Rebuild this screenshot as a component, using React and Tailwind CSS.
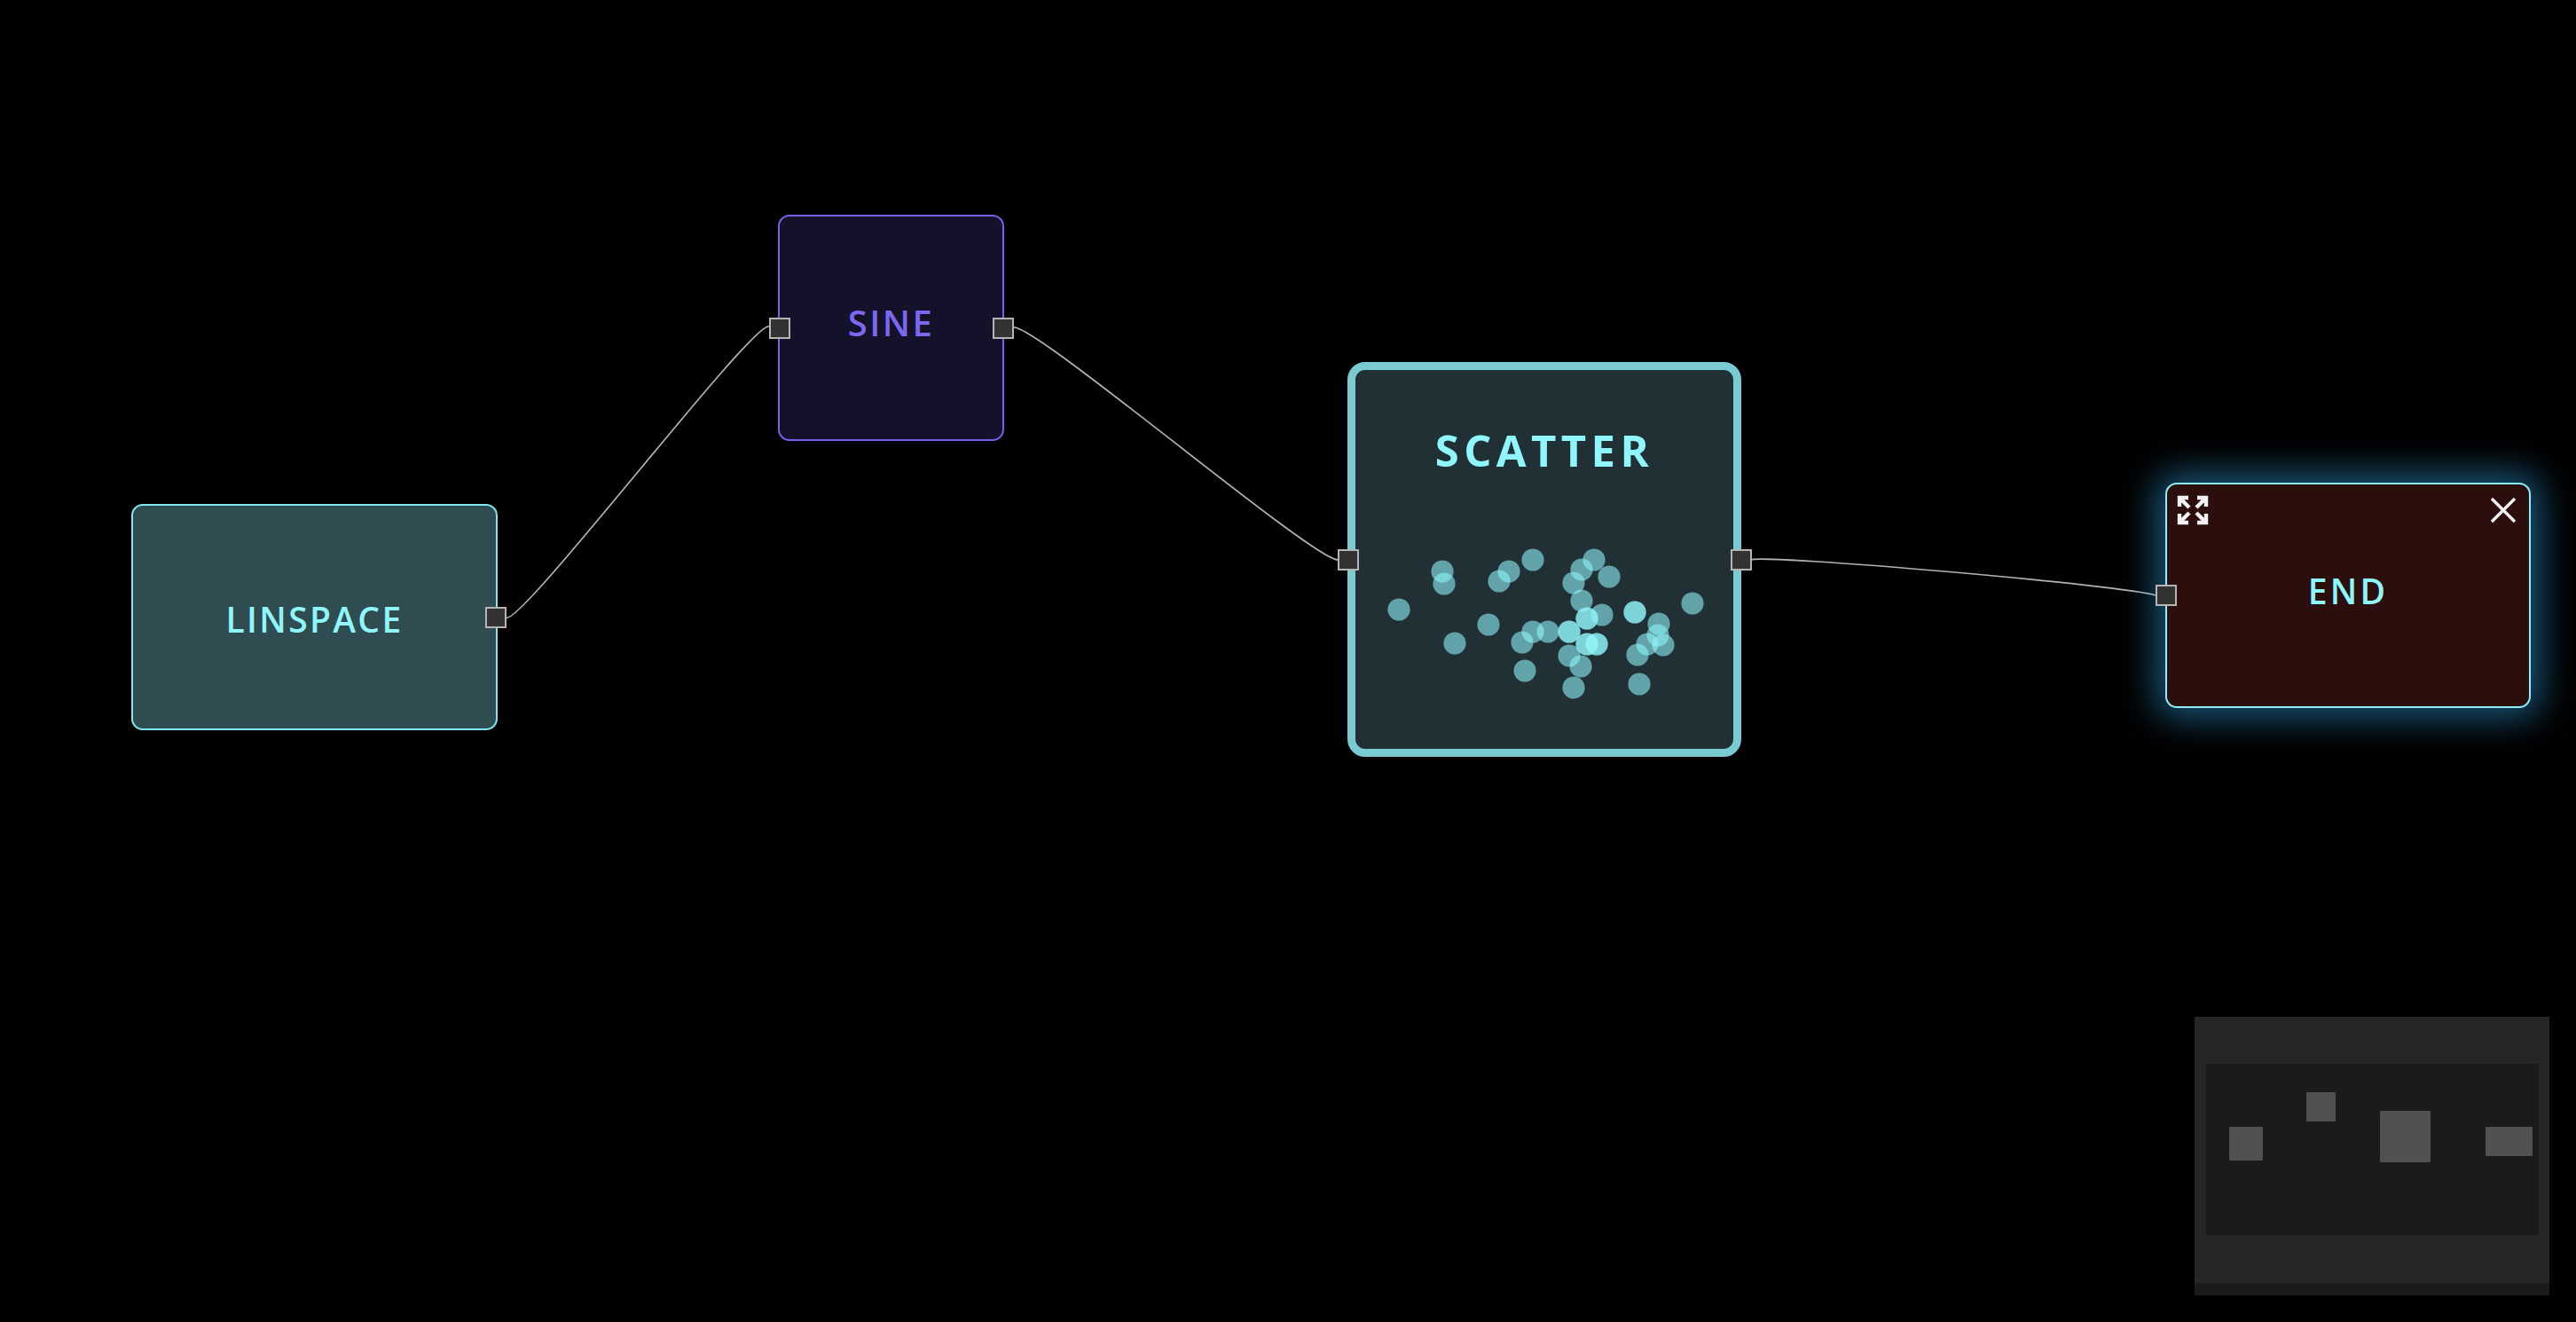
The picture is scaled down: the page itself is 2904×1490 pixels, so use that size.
const dots = [
  [1577, 687], [1626, 644], [1628, 658], [1640, 725], [1678, 704],
  [1690, 655], [1701, 644], [1728, 631], [1716, 724], [1728, 712],
  [1745, 712], [1719, 756], [1797, 631], [1783, 642], [1774, 657],
  [1814, 650], [1783, 677], [1806, 693], [1789, 697], [1789, 697],
  [1769, 712], [1769, 712], [1789, 726], [1789, 726], [1800, 726],
  [1800, 726], [1769, 739], [1782, 751], [1774, 775], [1843, 690],
  [1843, 690], [1870, 703], [1869, 716], [1857, 726], [1875, 727],
  [1846, 738], [1848, 771], [1908, 680],
];

function Port({ className }) {
  return (
    <div
      className={`absolute top-1/2 -translate-y-1/2 w-[24px] h-[24px] bg-[#333333] border-2 border-[#b4b4b4] ${className}`}
    />
  );
}

function ExpandIcon() {
  return (
    <svg width="38" height="36" viewBox="0 0 38 36" fill="none" stroke="#f2f2f2" strokeWidth="4.4">
      <path d="M4 14V4h10M4 4l11 11" />
      <path d="M24 4h10v10M34 4L23 15" />
      <path d="M4 22v10h10M4 32l11-11" />
      <path d="M34 22v10H24M34 32L23 21" />
    </svg>
  );
}

function CloseIcon() {
  return (
    <svg width="30" height="30" viewBox="0 0 30 30" fill="none" stroke="#f2f2f2" strokeWidth="3.4">
      <path d="M2 2l26 26M28 2L2 28" />
    </svg>
  );
}

function MiniMap() {
  return (
    <div className="absolute right-[30px] bottom-[30px] w-[400px] h-[314px]">
      <svg width="400" height="314" viewBox="0 0 400 314">
        <rect x="0" y="0" width="400" height="314" fill="#262626" />
        <rect x="13" y="53" width="375" height="193" fill="#1b1b1b" />
        <rect x="0" y="300" width="400" height="14" fill="#1b1b1b" />
        <rect x="39" y="124" width="38" height="38" rx="1" fill="#515151" />
        <rect x="126" y="85" width="33" height="33" rx="1" fill="#515151" />
        <rect x="209" y="106" width="57" height="58" rx="1" fill="#515151" />
        <rect x="328" y="124" width="53" height="33" rx="1" fill="#515151" />
      </svg>
    </div>
  );
}

export default function App() {
  return (
    <div className="relative w-[2904px] h-[1490px] bg-black overflow-hidden font-['Open_Sans',sans-serif]">
      {/* edges */}
      <svg className="absolute inset-0" width="2904" height="1490" fill="none" stroke="#b3b3b3" strokeWidth="1.7">
        <path d="M571 696 C590 702, 848 362, 867 368" />
        <path d="M1142 369 C1165 363, 1478 630, 1508 631" />
        <path d="M1974 631 C1985 624, 2400 660, 2430 671" />
      </svg>

      {/* LINSPACE */}
      <div className="absolute left-[148px] top-[568px] w-[413px] h-[255px] rounded-[13px] border-2 border-[#7fe8ef] bg-[#2f4d50] flex items-center justify-center pt-[4px]">
        <span className="text-[39px] leading-none font-semibold tracking-[0.06em] text-[#8ff6fc]">LINSPACE</span>
        <Port className="right-[-12px]" />
      </div>

      {/* SINE */}
      <div className="absolute left-[877px] top-[242px] w-[255px] h-[255px] rounded-[13px] border-2 border-[#7462e8] bg-[#14112b] flex items-center justify-center pb-[12px]">
        <span className="text-[40px] leading-none font-semibold tracking-[0.06em] text-[#7b68ee]">SINE</span>
        <Port className="left-[-12px]" />
        <Port className="right-[-13px]" />
      </div>

      {/* SCATTER */}
      <div className="absolute left-[1519px] top-[408px] w-[444px] h-[445px] rounded-[20px] border-[9px] border-[#79cad2] bg-[#203035] flex flex-col items-center">
        <span className="pt-[66px] text-[49px] leading-none font-bold tracking-[0.11em] text-[#8ff6fc]">SCATTER</span>
        <svg className="absolute inset-0" width="426" height="427" viewBox="0 0 426 427">
          <g transform="translate(-1528 -417)">
            {dots.map(([cx, cy], i) => (
              <circle key={i} cx={cx} cy={cy} r="12.6" fill="#90f6fc" fillOpacity="0.58" />
            ))}
          </g>
        </svg>
        <Port className="left-[-20px]" />
        <Port className="right-[-21px]" />
      </div>

      {/* END */}
      <div className="absolute left-[2441px] top-[544px] w-[412px] h-[254px] rounded-[13px] border-2 border-[#8cf0f8] bg-[#2c0e0c] shadow-[0_0_40px_10px_rgba(45,150,210,0.6)] flex items-center justify-center pb-[12px]">
        <div className="absolute left-[10px] top-[11px]">
          <ExpandIcon />
        </div>
        <div className="absolute right-[14px] top-[14px]">
          <CloseIcon />
        </div>
        <span className="text-[39px] leading-none font-semibold tracking-[0.08em] text-[#8ff6fc]">END</span>
        <Port className="left-[-13px]" />
      </div>

      <MiniMap />
    </div>
  );
}
